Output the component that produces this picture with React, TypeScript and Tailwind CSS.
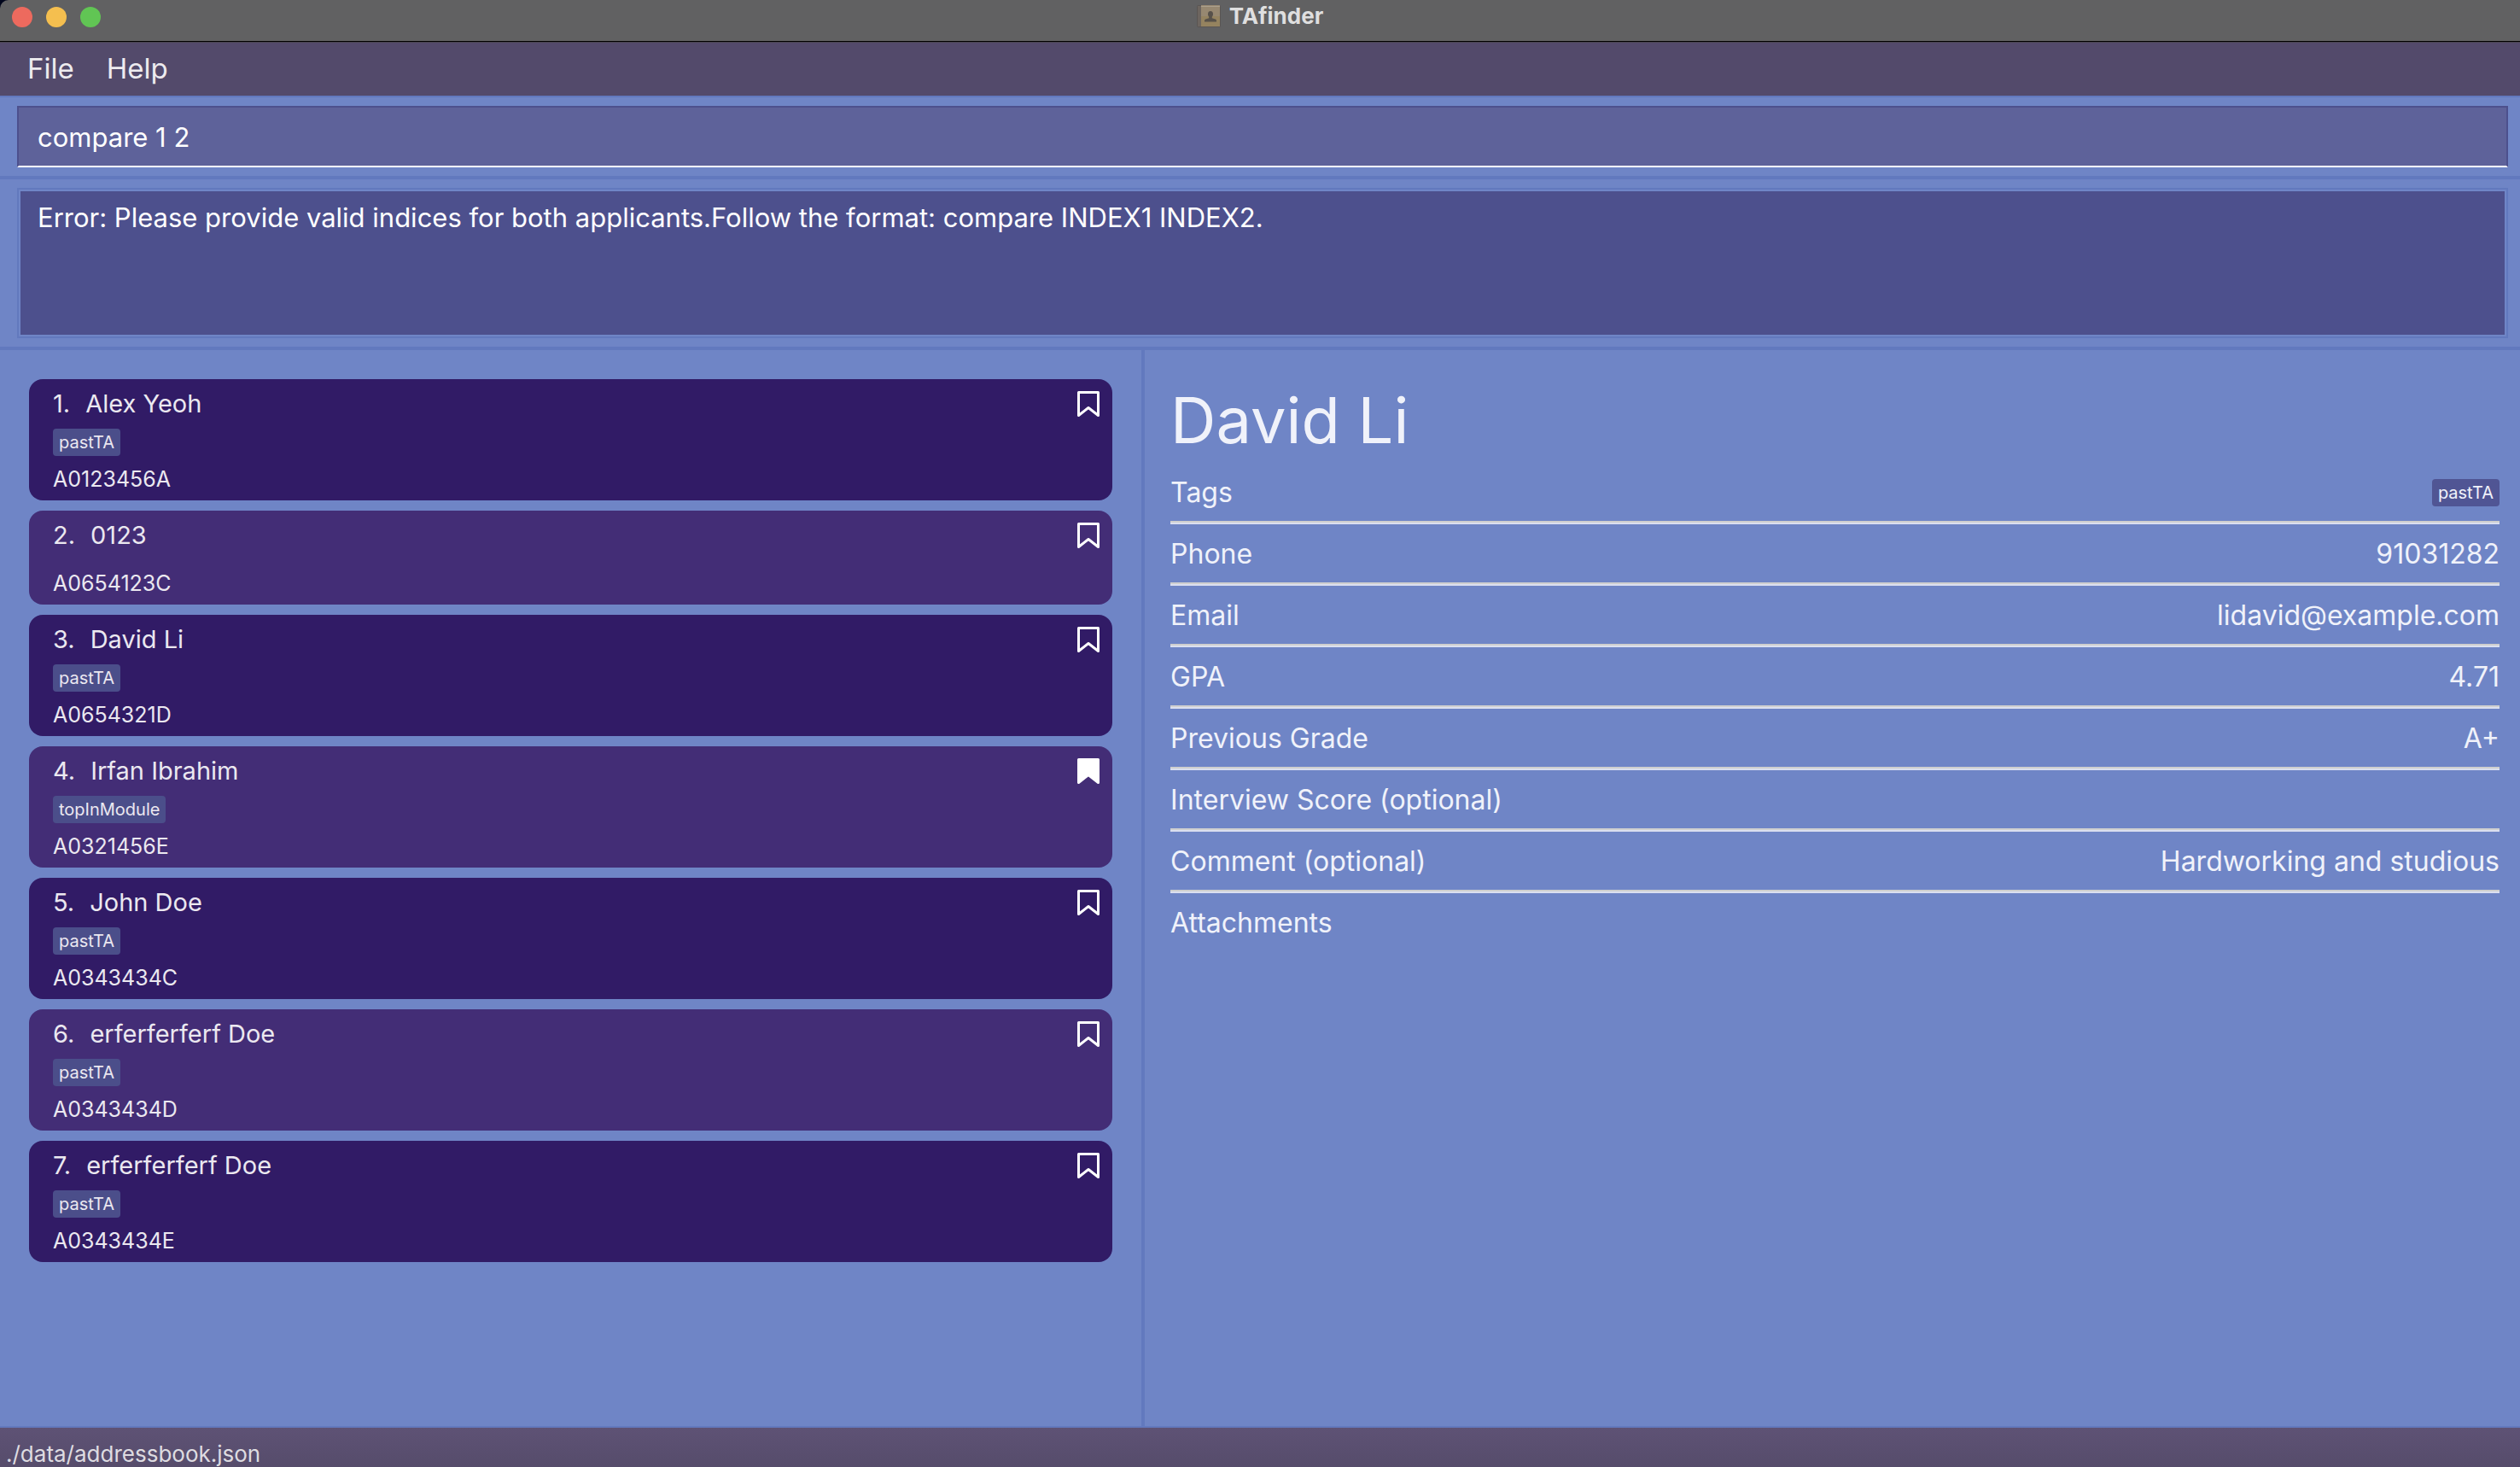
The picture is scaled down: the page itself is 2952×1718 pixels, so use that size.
type Applicant = { name: string; tags: string[]; id: string; marked?: boolean };

const applicants: Applicant[] = [
  { name: "Alex Yeoh", tags: ["pastTA"], id: "A0123456A" },
  { name: "0123", tags: [], id: "A0654123C" },
  { name: "David Li", tags: ["pastTA"], id: "A0654321D" },
  { name: "Irfan Ibrahim", tags: ["topInModule"], id: "A0321456E", marked: true },
  { name: "John Doe", tags: ["pastTA"], id: "A0343434C" },
  { name: "erferferferf Doe", tags: ["pastTA"], id: "A0343434D" },
  { name: "erferferferf Doe", tags: ["pastTA"], id: "A0343434E" },
];

const details: { label: string; value?: string; tag?: string }[] = [
  { label: "Tags", tag: "pastTA" },
  { label: "Phone", value: "91031282" },
  { label: "Email", value: "lidavid@example.com" },
  { label: "GPA", value: "4.71" },
  { label: "Previous Grade", value: "A+" },
  { label: "Interview Score (optional)" },
  { label: "Comment (optional)", value: "Hardworking and studious" },
  { label: "Attachments" },
];

function Bookmark({ filled }: { filled?: boolean }) {
  return (
    <svg viewBox="0 0 26 30" className="h-[30px] w-[26px]" aria-hidden="true">
      <path
        d="M1.5 1.5H24.5V28.5L13 19.5L1.5 28.5Z"
        fill={filled ? "#fff" : "none"}
        stroke="#fff"
        strokeWidth="3"
        strokeLinejoin="round"
      />
    </svg>
  );
}

function BookIcon() {
  return (
    <svg viewBox="0 0 28 26" className="h-[26px] w-7" aria-hidden="true">
      <rect x="0" y="0" width="28" height="26" rx="2" fill="#5a5553" />
      <rect x="1" y="1" width="4" height="24" fill="#6d655f" />
      <rect x="5" y="0" width="22" height="25" fill="#95835f" />
      <rect x="5" y="0" width="22" height="13" fill="#978871" />
      <rect x="5" y="1" width="22" height="1" fill="#aba08d" />
      <path
        d="M16 7c2 0 3 1.500 3 3.500 0 1.500-.6 2.500-1.200 3.200v1.500l4 1.300c.8.300 1.200 1 1.200 2v1H9v-1c0-1 .4-1.700 1.200-2l4-1.300v-1.500C13.600 13 13 12 13 10.500 13 8.500 14 7 16 7Z"
        fill="#57514a"
      />
    </svg>
  );
}

function Tag({ text, className }: { text: string; className: string }) {
  return (
    <span className={`flex h-8 items-center rounded-[4px] px-[7px] text-[20px] leading-8 ${className}`}>
      {text}
    </span>
  );
}

function TitleBar() {
  return (
    <header className="border-b border-black bg-[#01061c]">
      <div className="grid h-12 grid-cols-[1fr_auto_1fr] items-start rounded-tl-[10px] bg-[#616162]">
        <div className="flex gap-4 pt-2 pl-3.5">
          <button aria-label="Close" className="size-6 rounded-full bg-[#ed6a5e]" />
          <button aria-label="Minimize" className="size-6 rounded-full bg-[#f5bf4f]" />
          <button aria-label="Zoom" className="size-6 rounded-full bg-[#61c554]" />
        </div>
        <div className="flex items-center gap-2.5 pt-[5px]">
          <BookIcon />
          <h1 className="text-[26px] leading-7 font-bold text-[#dfdfdf]">TAfinder</h1>
        </div>
      </div>
    </header>
  );
}

export default function App() {
  return (
    <div className="flex min-h-screen flex-col bg-[#6f85c6] font-['Inter',sans-serif] text-[#f0f2fa]">
      <TitleBar />
      <nav className="flex h-[63px] items-start border-t border-[#4a4652] bg-[#534a6b] pt-2.5 pl-[13px] text-[33px] leading-10 text-[#edebef]">
        <button className="px-[19px]">File</button>
        <button className="px-[19px]">Help</button>
      </nav>

      <div className="border-y-2 border-[#6279be] pt-2.5 pr-3.5 pb-2.5 pl-5">
        <input
          aria-label="Command"
          defaultValue="compare 1 2"
          className="block h-[72px] w-full border-2 border-[#4d508d] border-b-white bg-[#5e629a] px-[22px] text-[31px] text-white outline-none"
        />
      </div>

      <div className="border-y-2 border-[#6279be] pt-2.5 pr-3.5 pb-2.5 pl-5">
        <div className="border-2 border-[#6279be] p-0.5">
          <output className="block min-h-[168px] bg-[#4d508d] px-5 pt-[11px] text-[31px] leading-10 text-white">
            Error: Please provide valid indices for both applicants.Follow the format: compare INDEX1 INDEX2.
          </output>
        </div>
      </div>

      <main className="grid flex-1 grid-cols-[83fr_4px_100fr] border-y-2 border-[#6279be]">
        <ul className="flex flex-col gap-3 px-[34px] pt-[34px]">
          {applicants.map((a, i) => (
            <li
              key={a.id}
              className="flex items-start justify-between rounded-2xl pt-2.5 pr-[15px] pb-2 pl-7 text-[#ebe8f0] odd:bg-[#311b66] even:bg-[#432d76]"
            >
              <div className="flex flex-col gap-2.5">
                <h2 className="flex gap-[18px] text-[29px] leading-[38px]">
                  <span>{i + 1}.</span>
                  <span>{a.name}</span>
                </h2>
                <div className="flex gap-2">
                  {a.tags.map((t) => (
                    <Tag key={t} text={t} className="bg-[#4b4e8a]" />
                  ))}
                </div>
                <p className="text-[25px] leading-[34px]">{a.id}</p>
              </div>
              <button aria-label="Bookmark" aria-pressed={!!a.marked} className="pt-1">
                <Bookmark filled={a.marked} />
              </button>
            </li>
          ))}
        </ul>
        <div className="bg-[#6279be]" />
        <section className="pt-8 pr-6 pl-[30px]">
          <h2 className="text-[74px] leading-[100px]">David Li</h2>
          <dl className="text-[32px] leading-10">
            {details.map((d) => (
              <div key={d.label} className="group">
                <div className="flex h-[68px] items-center justify-between pt-0.5">
                  <dt>{d.label}</dt>
                  <dd>{d.tag ? <Tag text={d.tag} className="bg-[#505594]" /> : d.value}</dd>
                </div>
                <div className="h-1 border-t-2 border-[#cfcfcf] bg-[#dadff0] group-last:hidden" />
              </div>
            ))}
          </dl>
        </section>
      </main>

      <footer className="bg-linear-to-b from-[#5e5275] to-[#564c6b] pt-4 pl-[7px] text-[26px] leading-[30px] text-[#dedce1]">
        ./data/addressbook.json
      </footer>
    </div>
  );
}
